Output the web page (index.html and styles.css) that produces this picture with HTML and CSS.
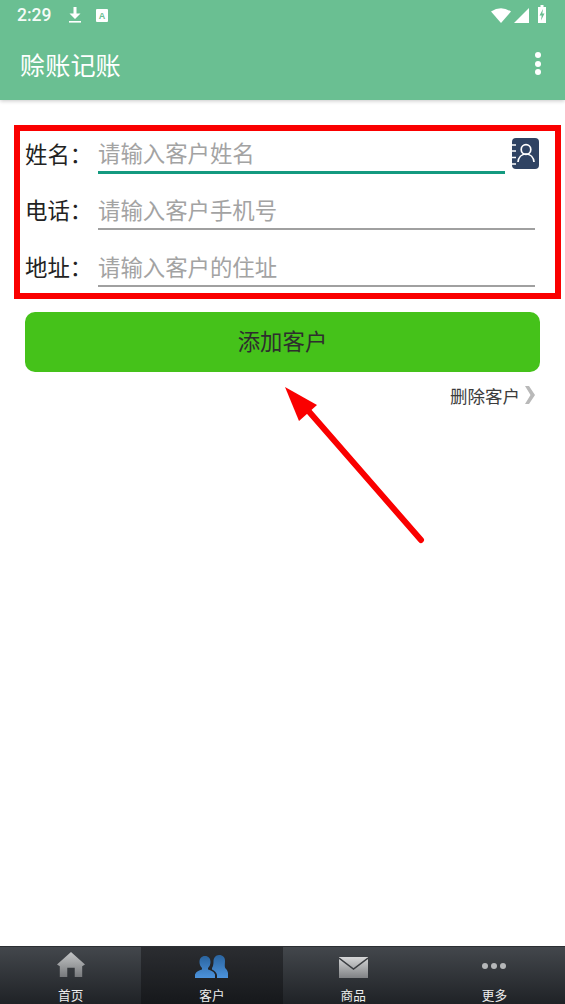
FILE: index.html
```html
<!DOCTYPE html>
<html lang="zh">
<head>
<meta charset="utf-8">
<title>赊账记账</title>
<link rel="stylesheet" href="styles.css">
</head>
<body>
<div class="page">
  <header class="header">
    <div class="status">
      <span class="time">2:29</span>
      <svg class="st-dl" width="14" height="18" viewBox="0 0 14 18"><path d="M5.500 1h3v6.500H12.500L7 13 1.500 7.500h4z" fill="#fff"/><rect x="1" y="15" width="12" height="1.600" fill="#fff"/></svg>
      <svg class="st-a" width="12" height="13" viewBox="0 0 12 13"><rect width="12" height="13" rx="1" fill="#fff"/><text x="6" y="10" class="st-a-t">A</text></svg>
      <span class="spacer"></span>
      <svg width="20" height="15" viewBox="0 0 20 15"><path d="M0 3.500Q10-3 20 3.500L10 15z" fill="#fff"/></svg>
      <svg class="st-sig" width="15" height="15" viewBox="0 0 15 15"><path d="M15 0v15H0z" fill="#fff"/></svg>
      <svg class="st-bat" width="8" height="18" viewBox="0 0 8 18"><path d="M2.500 0h3v2H8v16H0V2h2.500z" fill="#fff"/><path d="M5 4 1.500 10.500h2.200L3 15.500 6.500 8.500H4.300z" fill="#6abf92"/></svg>
    </div>
    <div class="toolbar">
      <span class="title">赊账记账</span>
      <span class="menu"><i></i><i></i><i></i></span>
    </div>
  </header>
  <main class="main">
    <div class="form">
      <div class="row first">
        <label class="lbl">姓名：</label>
        <div class="input focus">请输入客户姓名</div>
        <svg class="book" width="28" height="31" viewBox="0 0 28 31">
          <rect x="1" width="27" height="31" rx="4" fill="#2f4363"/>
          <path d="M0 7h5M0 13h5M0 19.500h5M0 26h5" stroke="#fff" stroke-width="1.500"/>
          <circle cx="15" cy="11.500" r="4.800" fill="none" stroke="#fff" stroke-width="1.700"/>
          <path d="M7 24c.5-4.500 3.500-8 8-8s7.500 3.500 8 8" fill="none" stroke="#fff" stroke-width="1.700"/>
        </svg>
      </div>
      <div class="row second">
        <label class="lbl">电话：</label>
        <div class="input">请输入客户手机号</div>
      </div>
      <div class="row">
        <label class="lbl">地址：</label>
        <div class="input">请输入客户的住址</div>
      </div>
    </div>
    <button class="add">添加客户</button>
    <div class="del"><span>删除客户</span><svg width="12" height="18" viewBox="0 0 12 18"><path d="M1 0h4l6 9-6 9H1l5.500-9z" fill="#b9b9b9"/></svg></div>
    <svg class="arrow" width="150" height="170" viewBox="0 0 150 170">
      <path d="M136 153 20 20" stroke="#fa0000" stroke-width="6" stroke-linecap="round"/>
      <path d="M0 0 32 18 14 34z" fill="#fa0000"/>
    </svg>
  </main>
  <nav class="tabs">
    <div class="tab">
      <svg class="i-home" width="28" height="27" viewBox="0 0 30 27"><defs><linearGradient id="g1" x1="0" y1="0" x2="0" y2="1"><stop offset="0" stop-color="#c4c6c7"/><stop offset="1" stop-color="#77797c"/></linearGradient></defs><path d="M15 0 30 13.500 27 15.500V27H19V17H11V27H3V15.500L0 13.500z" fill="url(#g1)"/></svg>
      <span>首页</span>
    </div>
    <div class="tab on">
      <svg class="i-people" width="33" height="23" viewBox="0 0 33 23"><defs><linearGradient id="g3" x1="0" y1="0" x2="0" y2="1"><stop offset="0" stop-color="#2a649f"/><stop offset="1" stop-color="#4c93dc"/></linearGradient></defs><path d="M10 1c3.500 0 5.500 2.500 5.500 6 0 2.500-1 4.500-2.500 6v1.500c3 1.200 6 2 7 5V23H0v-3.500c1-3 4-3.800 7-5V13C5.500 11.500 4.500 9.500 4.500 7c0-3.500 2-6 5.500-6z" fill="url(#g3)"/><path d="M24 0c4 0 6 2.500 6 6 0 2.500-.5 4.500 0 6.500.5 1.500 2.500 2 3 5.500v5H22v-3c-.5-2.500-2.500-4.500-5-5.500v-1.500c1-1.500 1.500-3.500 1.500-6.500C18.500 3 20.500 0 24 0z" fill="url(#g3)"/></svg>
      <span>客户</span>
    </div>
    <div class="tab">
      <svg class="i-mail" width="29" height="21" viewBox="0 0 29 21"><defs><linearGradient id="g2" x1="0" y1="0" x2="0" y2="1"><stop offset="0" stop-color="#d6d7d8"/><stop offset="1" stop-color="#808285"/></linearGradient></defs><rect width="29" height="21" fill="url(#g2)"/><path d="M0 1 14.500 12 29 1" fill="none" stroke="#3a3d41" stroke-width="1.500"/></svg>
      <span>商品</span>
    </div>
    <div class="tab">
      <span class="dots"><i></i><i></i><i></i></span>
      <span>更多</span>
    </div>
  </nav>
</div>
</body>
</html>
```
FILE: styles.css
```css
* { box-sizing: border-box; }
html, body { margin: 0; padding: 0; }
body { font-family: "Roboto", "Noto Sans CJK SC", sans-serif; background: #fff; }
.page { width: 565px; height: 1004px; display: flex; flex-direction: column; overflow: hidden; }

.header { height: 100px; background: #6abf92; color: #fff; box-shadow: 0 1px 4px rgba(0,0,0,.22); position: relative; z-index: 1; flex: none; }
.status { height: 33px; display: flex; align-items: center; padding: 0 19px 3px 17px; }
.time { font-size: 17.500px; font-weight: 500; width: 51px; color: #f4fbf7; }
.st-dl { margin-right: 14px; }
.st-a-t { font: 700 9px "Liberation Sans", sans-serif; fill: #6abf92; text-anchor: middle; }
.spacer { flex: 1; }
.st-sig { margin-left: 3px; margin-right: 9px; }
.st-bat { margin-bottom: 2px; }
.toolbar { height: 67px; display: flex; align-items: center; justify-content: space-between; padding: 0 24px 6px 20px; }
.title { font-size: 25.200px; font-family: "Noto Sans CJK SC", sans-serif; font-weight: 400; }
.menu { display: flex; flex-direction: column; gap: 2.500px; }
.menu i { width: 6px; height: 6px; border-radius: 50%; background: #fff; }

.main { flex: 1; position: relative; display: flex; flex-direction: column; padding: 25px 4px 0 14px; }
.form { width: 547px; height: 174px; border: 6px solid #fa0000; padding: 0 20px 0 5px; }
.row { height: 57px; display: flex; align-items: flex-end; position: relative; }
.row.first { height: 43px; }
.row.second { height: 56px; }
.lbl { font-size: 22.400px; line-height: 34px; margin-bottom: 2px; width: 73px; color: #222; flex: none; }
.input { flex: 1; line-height: 34px; font-size: 22.400px; color: #a3a3a3; border-bottom: 2px solid #a0a0a0; }
.input.focus { border-bottom: 3px solid #149a80; margin-right: 30px; }
.book { position: absolute; right: -4px; top: 7px; }

.add { margin: 13px 0 0 11px; width: 515px; height: 60px; border: 0; border-radius: 10px; background: #45c21a; color: #2e2e2e; font: 400 22.400px "Noto Sans CJK SC", sans-serif; padding: 0 0 4px; }
.del { margin: 11px 3px 0 0; height: 24px; display: flex; align-items: center; justify-content: flex-end; gap: 4px; font-size: 17.500px; color: #3c3c3c; padding-right: 22px; }
.arrow { position: absolute; left: 285px; top: 287px; }

.tabs { height: 58px; flex: none; display: flex; background: linear-gradient(#43474c, #1f2226); border-top: 1px solid #2b2e32; }
.tab { flex: 1; display: flex; flex-direction: column; align-items: center; justify-content: flex-end; color: #eee; font-size: 12.600px; line-height: 16px; }
.i-home { margin-bottom: 10px; }
.i-people { margin-bottom: 10px; }
.i-mail { margin-bottom: 10px; }
.tab.on { background: linear-gradient(#2b2d31, #16181b); }
.dots { display: flex; gap: 3px; margin-bottom: 14px; height: 16px; align-items: center; }
.dots i { width: 6px; height: 6px; border-radius: 50%; background: #b5b7b9; }
```
